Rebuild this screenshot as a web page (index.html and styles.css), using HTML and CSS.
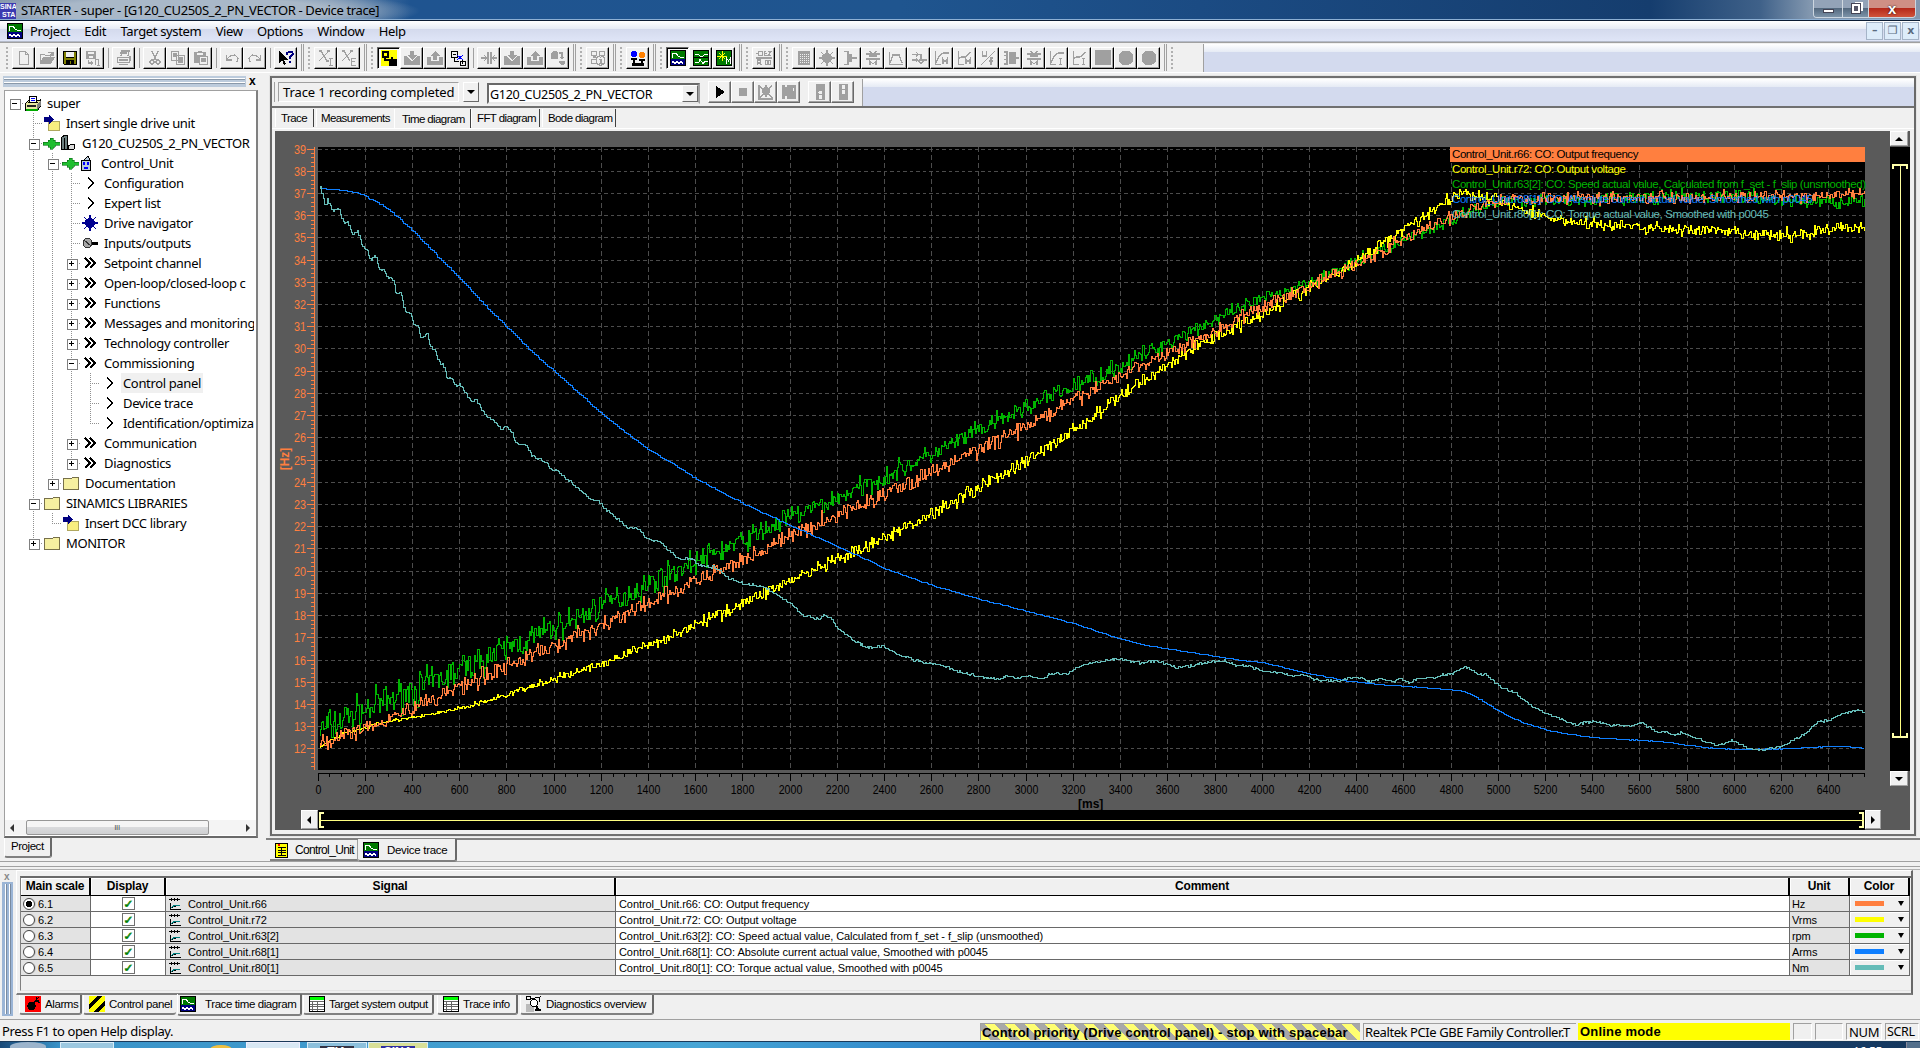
FILE: index.html
```html
<!DOCTYPE html>
<html lang="en">
<head>
<meta charset="utf-8">
<title>STARTER - super - [G120_CU250S_2_PN_VECTOR - Device trace]</title>
<link rel="stylesheet" href="styles.css">
</head>
<body>
<svg class="defs" width="0" height="0">
  <symbol id="new" viewBox="0 0 16 16"><path class="g" d="M3.5 1.5h6l3 3v10h-9zM9.5 1.5v3h3"/></symbol>
  <symbol id="open" viewBox="0 0 16 16"><path class="g" d="M1.5 13V4.500h4l1 1h5v2M9 2.500h3l2 2M14 2v3h-3"/><path class="gf" d="M1 14l3-7h12l-4 7z"/></symbol>
  <symbol id="save" viewBox="0 0 16 16"><path d="M1 1h14v14H2l-1-1z"/><path fill="#808000" d="M2 2h2v6h8V2h2v12H2z"/><path fill="#f0f0f0" d="M4 2h8v5H4zM9 11h2v3H9z"/><path d="M4 10h8v4H9v-3H8v3H4z"/></symbol>
  <symbol id="savebin" viewBox="0 0 16 16"><path class="gf" d="M1 1h10v8H1z"/><path fill="#f0f0f0" d="M3 2h6v2H3zM4 6h4v2H4z"/><path class="g" d="M3.500 10v3h4M6 11l2 2-2 2M10.500 9v6M13.500 9v6M11 9.500h2M12 15.500h3"/></symbol>
  <symbol id="print" viewBox="0 0 16 16"><path class="g" d="M5 6l1-5h7l-1 5M1.500 7.500h12v5h-12zM14 6v5M4 3h7M3 14.500h9M3 10h9"/></symbol>
  <symbol id="cut" viewBox="0 0 16 16"><path class="g" d="M5 1l4 9M11 1l-4 9"/><circle class="g" cx="5" cy="12" r="2"/><circle class="g" cx="11" cy="12" r="2"/></symbol>
  <symbol id="copy" viewBox="0 0 16 16"><path class="g" d="M1.500 1.500h7v9h-7zM3 4h4M3 6h4M6.500 5.500h8v9h-8zM8 8h5M8 10h5M8 12h5"/></symbol>
  <symbol id="paste" viewBox="0 0 16 16"><path class="gf" d="M1 2h12v11H1z"/><path fill="#f0f0f0" d="M4 3h6v2H4zM7 7h8v8H7z"/><path class="g" d="M6.500 6.500h8v8h-8zM8 9h5M8 11h5M5 1.500h4"/></symbol>
  <symbol id="undo" viewBox="0 0 16 16"><path class="g" d="M2.500 5v5h5M3 9l3-3 5-1 3 3-1 4"/></symbol>
  <symbol id="redo" viewBox="0 0 16 16"><path class="g" d="M13.500 5v5h-5M13 9l-3-3-5-1-3 3 1 4"/></symbol>
  <symbol id="help" viewBox="0 0 16 16"><path d="M1 1v12l3-3 2 5 2-1-2-4h4z"/><path fill="none" stroke="#000080" stroke-width="2" d="M9 5V3l2-1h3l1 2-3 3v2M12 11v2"/></symbol>
  <symbol id="xi" viewBox="0 0 16 16"><path class="g" d="M3 1l6 10M11 1L1 11M1 1h3M9 1h3M8 11h3M12.500 8v7M11 8.500h4M11 15.500h4"/></symbol>
  <symbol id="xe" viewBox="0 0 16 16"><path class="g" d="M3 1l6 10M11 1L1 11M1 1h3M9 1h3M10.500 8v7M10 8.500h5M10 11.500h4M10 15.500h5"/></symbol>
  <symbol id="online" viewBox="0 0 16 16"><path fill="none" stroke="#000" stroke-width="1.300" d="M2 2h5v5H2zM4 7v3h8M11 7v4M9 10h6v5H9zM11 10v4M13 10v4"/></symbol>
  <symbol id="offline" viewBox="0 0 16 16"><path fill="none" stroke="#000" d="M1.500 1.500h6v6h-6zM3 4h3M10 11h5v4h-5zM12 10v4M4 8v3h5"/><path stroke="#00f" fill="none" d="M7 5l6 5M13 5l-6 5"/></symbol>
  <symbol id="down" viewBox="0 0 16 16"><path class="gf" d="M6 1h4v4h3l-5 5-5-5h3zM0 6h3l5 6 5-6h3v9H0z"/></symbol>
  <symbol id="up" viewBox="0 0 16 16"><path class="gf" d="M6 10V6H3l5-5 5 5h-3v4zM0 7h4v4h8V7h4v8H0z"/></symbol>
  <symbol id="split" viewBox="0 0 16 16"><path class="g" d="M7 2v12M10 2v12M0 8h6M3 5l3 3-3 3M16 8h-5M14 5l-3 3 3 3"/></symbol>
  <symbol id="conv" viewBox="0 0 16 16"><path class="gf" d="M1 3l2-2h3l2 2v6H1zM9 11h6v2l-2 2h-2l-2-2z"/><path class="g" d="M9 3h3v6M10 7l2 2 2-2"/></symbol>
  <symbol id="info" viewBox="0 0 16 16"><path class="g" d="M1.500 1.500h5v4h-5zM9.500 1.500h5v4h-5zM1.500 9.500h5v4h-5zM3 7h3M10.500 5.500l4 2v6l-4 2-4-2v-6zM10.500 7v1M9 9.500h2v4M9 13.500h4"/></symbol>
  <symbol id="asgn" viewBox="0 0 16 16"><circle cx="4" cy="4" r="3.300" fill="#00f"/><circle cx="12" cy="5" r="3.300" fill="#ff8000"/><path fill="none" stroke="#000" stroke-width="1.500" d="M1 9h6M4 9v4M9 10h6M12 10v3"/><path d="M2 13h12v3H2z"/></symbol>
  <symbol id="trace" viewBox="0 0 16 16"><path d="M0 0h16v9H0z" fill="#007a00"/><path d="M0 9h16v7H0z" fill="#000080"/><path class="w" d="M2 8V3h4l2 3 2 1h4"/><path class="w" d="M2 12.500l1-1 1 1 1 1 1-1 1-1 1 1 1 1 1-1 1-1 1 1 1 1"/><path fill="none" stroke="#000" d="M.5.5h15v15H.5z"/></symbol>
  <symbol id="fgen" viewBox="0 0 16 16"><path d="M0 0h16v16H0z" fill="#007a00"/><path class="w" d="M2 4h3l2 2h3l2-2h3M2 12h4l1-3 3 5 2-3h3"/><path d="M0 7h16v1H0z"/><path fill="none" stroke="#000" d="M.5.5h15v15H.5z"/></symbol>
  <symbol id="meas" viewBox="0 0 16 16"><path d="M0 0h16v16H0z" fill="#007a00"/><path stroke="#ff0" fill="none" d="M6 1v10M1 6h10M3 3l6 6M9 3L3 9"/><path class="w" d="M10.500 14V8l2 3 2-3v6"/><path fill="none" stroke="#000" d="M.5.5h15v15H.5z"/></symbol>
  <symbol id="re" viewBox="0 0 16 16"><path class="g" d="M0 3.500h2M2.500 1.500h4v4h-4zM10 1.500H8.500v4H11M8.500 3.500h2M12 1.500h3l-3 4h3M0 8h16M1.500 15v-5h3v3h-3M4 13l1 2M9.500 10.500h5v4h-5zM12 10v5"/></symbol>
  <symbol id="tbl" viewBox="0 0 16 16"><path class="gf" d="M2 1h12v14H2z"/><path stroke="#f0f0f0" stroke-dasharray="1 1" d="M4 4.500h9M4 6.500h9M4 8.500h9M4 10.500h9M4 12.500h9"/></symbol>
  <symbol id="wheel" viewBox="0 0 16 16"><path stroke="currentColor" stroke-width="1.400" fill="none" d="M8 0v16M0 8h16M2 2l12 12M14 2L2 14"/><circle cx="8" cy="8" r="4" fill="none" stroke="currentColor" stroke-width="2.400"/></symbol>
  <symbol id="act" viewBox="0 0 16 16"><path class="g" d="M2 1.500h4v13H2M6 8h9"/><path class="gf" d="M6 4h4v8H6z"/></symbol>
  <symbol id="lim" viewBox="0 0 16 16"><path class="gf" d="M1 3h14v2H1zM1 8h14v2H1z"/><path class="g" d="M4 1l3 2M12 1L9 3M5 15v-4l3 3 3-3v4M4 6h8"/></symbol>
  <symbol id="ramp" viewBox="0 0 16 16"><path class="g" d="M1.500 2v12.500H15M2 13l3-8h6l3 8"/></symbol>
  <symbol id="lim2" viewBox="0 0 16 16"><path class="g" d="M1 4.500h9v6M1 10h6M5 2l2 2-2 3M5 8l2 2-2 2M12 10h4"/><circle class="g" cx="10" cy="11" r="2"/></symbol>
  <symbol id="cm" viewBox="0 0 16 16"><path class="g" d="M1.500 1v13.500H7M2 13l3-7 4-3h6M9 14v-5l2 3 2-3v5"/></symbol>
  <symbol id="lm" viewBox="0 0 16 16"><path class="g" d="M1.500 1v13.500H7M1 9l4-2h3l6-5M9 14V9l2 3 2-3v5"/></symbol>
  <symbol id="uf" viewBox="0 0 16 16"><path class="g" d="M2.500 1v5h4V1M15 1L1 15M13 8h-2v7M9 11h4"/></symbol>
  <symbol id="ml" viewBox="0 0 16 16"><path class="g" d="M1 2h3v12H1M4 5.500H1M4 9.500H1M13 8h3"/><path class="gf" d="M6 2h7v12H6z"/></symbol>
  <symbol id="ci" viewBox="0 0 16 16"><path class="g" d="M1.500 1v13.500H7M2 13l3-7 4-3h6M11.500 9v5M10 8.500h3M10 14.500h3"/></symbol>
  <symbol id="li" viewBox="0 0 16 16"><path class="g" d="M1.500 1v13.500H7M1 9l4-2h3l6-5M11.500 9v5M10 8.500h3M10 14.500h3"/></symbol>
  <symbol id="sq" viewBox="0 0 16 16"><path class="gf" d="M0 0h16v15H0z"/></symbol>
  <symbol id="ci2" viewBox="0 0 16 16"><circle class="gf" cx="8" cy="8" r="7.500"/></symbol>
  <symbol id="play" viewBox="0 0 16 16"><path d="M4 2v12l9-6z"/></symbol>
  <symbol id="stop" viewBox="0 0 16 16"><path class="gf" d="M4 4h8v8H4z"/></symbol>
  <symbol id="tr1" viewBox="0 0 16 16"><path class="g" d="M1 1v14h14M1 2l14 12M14 1L2 14M8 1v12"/><circle class="gf" cx="8" cy="7" r="4"/></symbol>
  <symbol id="tr2" viewBox="0 0 16 16"><path class="gf" d="M1 1h14v14H1z"/><path fill="#f0f0f0" d="M4 1h2v2H4zM12 4h1v3h-1zM4 12h2v3H4z"/></symbol>
  <symbol id="lt1" viewBox="0 0 16 16"><path class="gf" d="M4 0h9v16H4z"/><circle cx="8.500" cy="8.500" r="2" fill="#f0f0f0"/><circle cx="8.500" cy="13" r="2" fill="#f0f0f0"/></symbol>
  <symbol id="lt2" viewBox="0 0 16 16"><path class="gf" d="M4 0h9v16H4z"/><circle cx="8.500" cy="3" r="2" fill="#f0f0f0"/><circle cx="8.500" cy="8" r="2" fill="#f0f0f0"/></symbol>
  <symbol id="proj" viewBox="0 0 16 16"><path fill="#e8e8a0" stroke="#000" d="M.5 8.500l3-3h11l1-1v7l-3 3.500h-12z"/><path fill="#fff" stroke="#000" d="M4 7l1-6h6l1 6z"/><path stroke="#00f" d="M6 3h4M6 5h4"/><path fill="#808080" d="M12 9l4-4v5l-4 4z"/><path fill="#222" d="M2 10h9v2H2z"/><path fill="#0a0" d="M1 14h12v1.500H1z"/></symbol>
  <symbol id="ins" viewBox="0 0 16 16"><path fill="#f8ee80" stroke="#b0a860" d="M4 6h11v9H4z"/><path fill="#000080" d="M0 2h5V0l5 4.500L5 9V7H0z"/></symbol>
  <symbol id="plug" viewBox="0 0 17 16"><path fill="#1fbf2f" stroke="#0a6a18" stroke-width=".6" d="M0 7h5V5h2V3h3v2h2v2h5v3h-5v2h-2v2H7v-2H5v-2H0z"/></symbol>
  <symbol id="drive" viewBox="0 0 16 16"><path fill="#6d8080" stroke="#000" d="M1 3l3-2.500h3v14H1zM4 3v11"/><path fill="#ddd" stroke="#000" d="M8 11l4-2 3 1-1 4-5 1z"/></symbol>
  <symbol id="cu" viewBox="0 0 16 16"><path fill="#bcd" stroke="#000" d="M2.500 5.500h9v10h-9zM5 5l4-4 2 4"/><path fill="#00f" d="M4 7h2v3H4zM8 7h2v3H8zM5 12h4v2H5z"/></symbol>
  <symbol id="one" viewBox="0 0 16 16"><path fill="none" stroke="#000" stroke-width="1.500" d="M6 2.500l5 5.500-5 5.500"/></symbol>
  <symbol id="two" viewBox="0 0 16 16"><path fill="none" stroke="#000" stroke-width="1.500" d="M3 3l5 5-5 5M8 3l5 5-5 5"/></symbol>
  <symbol id="io" viewBox="0 0 16 16"><circle cx="5.500" cy="8" r="4.500" fill="#a8a8a8" stroke="#333"/><path stroke="#333" d="M2 5l7 6"/><path d="M10 7h6v3h-6z"/></symbol>
  <symbol id="folder" viewBox="0 0 16 16"><path fill="#f6f0a0" stroke="#77704a" d="M.5 14.500v-11h8l1-1.500h6v12.500z"/></symbol>
  <symbol id="bin" viewBox="0 0 14 16"><path fill="#ff0" stroke="#000" d="M.5 1.500h12v14H.5z"/><path stroke="#000" d="M3 5.500h8M3 8h8M3 10.500h8M3 13h8M6 5v9"/><path fill="#f00" d="M3 2h2v2H3z"/></symbol>
  <symbol id="alarm" viewBox="0 0 16 16"><path fill="#f00" d="M0 0h16v16H0z"/><circle cx="6.500" cy="10" r="4.200"/><path stroke="#000" fill="none" d="M9 7l2-3h3M11 1v5M14 1l-3 3 4 3"/></symbol>
  <symbol id="stripe" viewBox="0 0 16 16"><path fill="#ff0" d="M0 0h16v16H0z"/><path d="M0 8l8-8h5L0 13zM4 16L16 4v5l-7 7z"/></symbol>
  <symbol id="list" viewBox="0 0 16 16"><path fill="#fff" stroke="#000" d="M.5.500h15v15H.5z"/><path fill="#0f0" d="M1 1h14v3H1z"/><path fill="none" stroke="#666" d="M1 5.500h14M1 8.500h14M1 10.500h14M1 13.500h14M8.500 5v10M3.500 5v10"/></symbol>
  <symbol id="diag" viewBox="0 0 16 16"><path fill="#bbb" d="M0 8h8v8H0z"/><path fill="none" stroke="#000" d="M.5.500h4v3h-4zM5 2h4l5-1-1 5"/><circle cx="8" cy="7" r="3.500" fill="#fff" stroke="#000"/><path stroke="#000" stroke-width="2" d="M10 10l2 3M9 14h6"/></symbol>
  <symbol id="sig" viewBox="0 0 12 13"><path fill="none" stroke="#000" d="M0 2.500h11M2.500 1v3M5.500 1v3M8.500 1v3M1.500 6v6.500h10"/><path stroke="#008080" d="M2 11l3-2.500h6"/></symbol>
</svg>

<header class="titlebar">
  <span class="appicon">SINA<br>&nbsp;STA</span>
  <span class="title">STARTER - super - [G120_CU250S_2_PN_VECTOR - Device trace]</span>
  <span class="winbtns"><b class="min"><i></i></b><b class="max"><i></i></b><b class="cls">x</b></span>
</header>

<nav class="menubar">
  <svg class="ic"><use href="#trace"/></svg>
  <span>Project</span><span>Edit</span><span>Target system</span><span>View</span><span>Options</span><span>Window</span><span>Help</span>
  <span class="mdi"><b>–</b><b>❐</b><b>x</b></span>
</nav>

<div class="toolbar">
  <i class="gap first"></i>
  <b><svg><use href="#new"/></svg></b><b><svg><use href="#open"/></svg></b><b><svg><use href="#save"/></svg></b><b><svg><use href="#savebin"/></svg></b><i class="sep"></i>
  <b><svg><use href="#print"/></svg></b><i class="sep"></i>
  <b><svg><use href="#cut"/></svg></b><b><svg><use href="#copy"/></svg></b><b><svg><use href="#paste"/></svg></b><i class="sep"></i>
  <b><svg><use href="#undo"/></svg></b><b><svg><use href="#redo"/></svg></b><i class="sep"></i>
  <b><svg><use href="#help"/></svg></b><i class="gap"></i>
  <b><svg><use href="#xi"/></svg></b><b><svg><use href="#xe"/></svg></b><i class="gap"></i>
  <b class="on"><svg class="yel"><use href="#online"/></svg></b><b><svg><use href="#down"/></svg></b><b><svg><use href="#up"/></svg></b><b><svg><use href="#offline"/></svg></b><i class="sep"></i>
  <b><svg><use href="#split"/></svg></b><b><svg><use href="#down"/></svg></b><b><svg><use href="#up"/></svg></b><b><svg><use href="#conv"/></svg></b><i class="gap"></i>
  <b><svg><use href="#info"/></svg></b><i class="gap"></i>
  <b><svg><use href="#asgn"/></svg></b><i class="gap"></i>
  <b class="on"><svg><use href="#trace"/></svg></b><b><svg><use href="#fgen"/></svg></b><b><svg><use href="#meas"/></svg></b><i class="gap"></i>
  <b><svg><use href="#re"/></svg></b><i class="gap"></i>
  <b><svg><use href="#tbl"/></svg></b><b><svg class="gr"><use href="#wheel"/></svg></b><b><svg><use href="#act"/></svg></b><b><svg><use href="#lim"/></svg></b><b><svg><use href="#ramp"/></svg></b><b><svg><use href="#lim2"/></svg></b><b><svg><use href="#cm"/></svg></b><b><svg><use href="#lm"/></svg></b><b><svg><use href="#uf"/></svg></b><b><svg><use href="#ml"/></svg></b><b><svg><use href="#lim"/></svg></b><b><svg><use href="#ci"/></svg></b><b><svg><use href="#li"/></svg></b><b><svg><use href="#sq"/></svg></b><b><svg><use href="#ci2"/></svg></b><b><svg><use href="#ci2"/></svg></b><i class="gap"></i>
  <i class="rest"></i>
</div>

<main class="main">
  <aside class="side">
    <div class="grip"><i></i><b>x</b></div>
    <div class="treebox">
      <div class="tree">
        <p><i class="mn root"></i><svg><use href="#proj"/></svg><span>super</span></p>
        <p><i></i><i class="te"></i><svg><use href="#ins"/></svg><span>Insert single drive unit</span></p>
        <p><i></i><i class="te mn"></i><svg class="plug"><use href="#plug"/></svg><svg class="n"><use href="#drive"/></svg><span>G120_CU250S_2_PN_VECTOR</span></p>
        <p><i></i><i class="ln"></i><i class="te mn"></i><svg class="plug"><use href="#plug"/></svg><svg class="n"><use href="#cu"/></svg><span>Control_Unit</span></p>
        <p><i></i><i class="ln"></i><i class="ln"></i><i class="te"></i><svg><use href="#one"/></svg><span>Configuration</span></p>
        <p><i></i><i class="ln"></i><i class="ln"></i><i class="te"></i><svg><use href="#one"/></svg><span>Expert list</span></p>
        <p><i></i><i class="ln"></i><i class="ln"></i><i class="te"></i><svg class="navy"><use href="#wheel"/></svg><span>Drive navigator</span></p>
        <p><i></i><i class="ln"></i><i class="ln"></i><i class="te"></i><svg><use href="#io"/></svg><span>Inputs/outputs</span></p>
        <p><i></i><i class="ln"></i><i class="ln"></i><i class="te pl"></i><svg><use href="#two"/></svg><span>Setpoint channel</span></p>
        <p><i></i><i class="ln"></i><i class="ln"></i><i class="te pl"></i><svg><use href="#two"/></svg><span>Open-loop/closed-loop c</span></p>
        <p><i></i><i class="ln"></i><i class="ln"></i><i class="te pl"></i><svg><use href="#two"/></svg><span>Functions</span></p>
        <p><i></i><i class="ln"></i><i class="ln"></i><i class="te pl"></i><svg><use href="#two"/></svg><span>Messages and monitoring</span></p>
        <p><i></i><i class="ln"></i><i class="ln"></i><i class="te pl"></i><svg><use href="#two"/></svg><span>Technology controller</span></p>
        <p><i></i><i class="ln"></i><i class="ln"></i><i class="te mn"></i><svg><use href="#two"/></svg><span>Commissioning</span></p>
        <p><i></i><i class="ln"></i><i class="ln"></i><i class="ln"></i><i class="te"></i><svg><use href="#one"/></svg><span class="sel">Control panel</span></p>
        <p><i></i><i class="ln"></i><i class="ln"></i><i class="ln"></i><i class="te"></i><svg><use href="#one"/></svg><span>Device trace</span></p>
        <p><i></i><i class="ln"></i><i class="ln"></i><i class="ln"></i><i class="te end"></i><svg><use href="#one"/></svg><span>Identification/optimizat</span></p>
        <p><i></i><i class="ln"></i><i class="ln"></i><i class="te pl"></i><svg><use href="#two"/></svg><span>Communication</span></p>
        <p><i></i><i class="ln"></i><i class="ln"></i><i class="te end pl"></i><svg><use href="#two"/></svg><span>Diagnostics</span></p>
        <p><i></i><i class="ln"></i><i class="te end pl"></i><svg><use href="#folder"/></svg><span>Documentation</span></p>
        <p><i></i><i class="te mn"></i><svg><use href="#folder"/></svg><span>SINAMICS LIBRARIES</span></p>
        <p><i></i><i class="ln"></i><i class="te end"></i><svg><use href="#ins"/></svg><span>Insert DCC library</span></p>
        <p><i></i><i class="te end pl"></i><svg><use href="#folder"/></svg><span>MONITOR</span></p>
      </div>
      <div class="hbar"><i class="al"></i><b>III</b><i class="ar"></i></div>
    </div>
    <div class="sidetab ms">Project</div>
  </aside>

  <section class="work">
    <div class="frame">
      <div class="tracebar">
        <div class="combo1">Trace 1 recording completed</div>
        <i class="dd"></i>
        <div class="combo2"><span>G120_CU250S_2_PN_VECTOR</span><i class="dd"></i></div>
        <div class="tbtns">
          <b><svg><use href="#play"/></svg></b><b><svg><use href="#stop"/></svg></b><b><svg><use href="#tr1"/></svg></b><b><svg><use href="#tr2"/></svg></b><i></i><b><svg><use href="#lt1"/></svg></b><b><svg><use href="#lt2"/></svg></b>
        </div>
        <div class="rest"></div>
      </div>
      <div class="tabs ms"><span>Trace</span><span>Measurements</span><span class="act">Time diagram</span><span>FFT diagram</span><span>Bode diagram</span></div>
      <div class="panel">
        <svg id="chart" class="chart" width="1615" height="679" viewBox="275 131 1615 679"></svg>
        <div class="vscroll"><i class="sb up"></i><div class="track"><i class="br"></i></div><i class="sb dn"></i></div>
        <div class="hscroll"><i class="sb lf"></i><div class="track"><i class="br"></i></div><i class="sb rt"></i></div>
        <ul class="legend ms">
          <li class="first">Control_Unit.r66: CO: Output frequency</li>
          <li class="c2">Control_Unit.r72: CO: Output voltage</li>
          <li class="c3">Control_Unit.r63[2]: CO: Speed actual value, Calculated from f_set - f_slip (unsmoothed)</li>
          <li class="c4">Control_Unit.r68[1]: CO: Absolute current actual value, Smoothed with p0045</li>
          <li class="c5">Control_Unit.r80[1]: CO: Torque actual value, Smoothed with p0045</li>
        </ul>
      </div>
    </div>
    <div class="worktabs ms"><span class="t1"><svg width="14" height="16"><use href="#bin"/></svg>Control_Unit</span><span class="t2"><svg width="16" height="16"><use href="#trace"/></svg>Device trace</span></div>
  </section>
</main>

<section class="dock">
  <div class="dgrip"><b>x</b><i></i></div>
  <div class="dmain">
    <div class="dframe">
      <div class="grid">
        <div class="row head"><b>Main scale</b><b>Display</b><b>Signal</b><b>Comment</b><b>Unit</b><b>Color</b></div>
        <div class="row"><span class="r"><i class="rad on"></i>6.1</span><span class="c"><i>✓</i></span><span class="s"><svg><use href="#sig"/></svg>Control_Unit.r66</span><span>Control_Unit.r66: CO: Output frequency</span><span class="u">Hz</span><span class="k k1"><i></i></span></div>
        <div class="row"><span class="r"><i class="rad"></i>6.2</span><span class="c"><i>✓</i></span><span class="s"><svg><use href="#sig"/></svg>Control_Unit.r72</span><span>Control_Unit.r72: CO: Output voltage</span><span class="u">Vrms</span><span class="k k2"><i></i></span></div>
        <div class="row"><span class="r"><i class="rad"></i>6.3</span><span class="c"><i>✓</i></span><span class="s"><svg><use href="#sig"/></svg>Control_Unit.r63[2]</span><span>Control_Unit.r63[2]: CO: Speed actual value, Calculated from f_set - f_slip (unsmoothed)</span><span class="u">rpm</span><span class="k k3"><i></i></span></div>
        <div class="row"><span class="r"><i class="rad"></i>6.4</span><span class="c"><i>✓</i></span><span class="s"><svg><use href="#sig"/></svg>Control_Unit.r68[1]</span><span>Control_Unit.r68[1]: CO: Absolute current actual value, Smoothed with p0045</span><span class="u">Arms</span><span class="k k4"><i></i></span></div>
        <div class="row"><span class="r"><i class="rad"></i>6.5</span><span class="c"><i>✓</i></span><span class="s"><svg><use href="#sig"/></svg>Control_Unit.r80[1]</span><span>Control_Unit.r80[1]: CO: Torque actual value, Smoothed with p0045</span><span class="u">Nm</span><span class="k k5"><i></i></span></div>
      </div>
    </div>
    <div class="dtabs ms"><span class="d1"><svg><use href="#alarm"/></svg>Alarms</span><span class="d2"><svg><use href="#stripe"/></svg>Control panel</span><span class="d3 act"><svg><use href="#trace"/></svg>Trace time diagram</span><span class="d4"><svg><use href="#list"/></svg>Target system output</span><span class="d5"><svg><use href="#list"/></svg>Trace info</span><span class="d6"><svg><use href="#diag"/></svg>Diagnostics overview</span></div>
  </div>
</section>

<footer class="status">
  <span class="msg">Press F1 to open Help display.</span>
  <span class="prio">Control priority (Drive control panel) - stop with spacebar</span>
  <span class="nic">Realtek PCIe GBE Family Controller.T</span>
  <span class="mode">Online mode</span>
  <span class="e1"></span><span class="e2"></span><span class="num">NUM</span><span class="scrl">SCRL</span>
</footer>
<div class="taskbar"><i class="orb"></i><i class="a"></i><i class="ie"></i><i class="b"></i><i class="c"><b>TIA</b></i><i class="d"><b>SINA</b></i><i class="clock">16:55</i><i class="show"></i></div>
<script src="chart.js"></script>
</body>
</html>
```
FILE: styles.css
```css
* { box-sizing: border-box; }
body { margin: 0; width: 1920px; height: 1048px; overflow: hidden; background: #f0f0f0; color: #000; font: 13px "Noto Sans", "Open Sans", sans-serif; letter-spacing: -0.35px; display: flex; flex-direction: column; }
i, b { font-style: normal; display: block; }
p, ul { margin: 0; padding: 0; list-style: none; }
svg { display: block; flex: none; shape-rendering: crispEdges; }
.defs { position: absolute; }
.g { fill: none; stroke: #a0a0a0; stroke-width: 1.35; }
.gf { fill: #a0a0a0; }
.w { fill: none; stroke: #fff; }
.ms { font: 11.5px "Liberation Sans", Arial, sans-serif; letter-spacing: -0.6px; }

.titlebar { height: 21px; flex: none; display: flex; align-items: center; border-bottom: 1px solid #0b1c33; box-shadow: inset 0 -1px #8db0d4; background: radial-gradient(ellipse 230px 22px at 190px 11px, #a9b8c8 60%, transparent 100%), linear-gradient(90deg, #8193a8 0, #6e8cae 330px, #1f5490 410px, #1f558f 900px, #1b4b83 1200px, #153d6e 1650px, #3f6189 1760px, #8297af 1810px); }
.appicon { width: 16px; height: 16px; margin-top: 2px; background: #3a3ab0; color: #fff; font: bold 7px/8px "Liberation Sans", sans-serif; overflow: hidden; letter-spacing: 0; }
.title { margin-left: 5px; flex: 1; line-height: 18px; }
.winbtns { display: flex; align-self: flex-start; height: 18px; margin-right: 4px; border: 1px solid #ccd6e0; border-top: 0; border-radius: 0 0 4px 4px; overflow: hidden; }
.winbtns b { height: 17px; border-right: 1px solid #d0d8e0; background: linear-gradient(#93a3b8 45%, #54697f 50%, #7c93a8); color: #fff; display: flex; align-items: center; justify-content: center; }
.min { width: 29px; } .max { width: 26px; }
.min i { width: 11px; height: 4px; background: #fff; border: 1px solid #445; margin-top: 5px; }
.max i { width: 8px; height: 9px; border: 2px solid #fff; outline: 1px solid #445; background: #556; box-shadow: 3px -2px #fff; }
.winbtns .cls { width: 46px; border: 0; background: linear-gradient(#cf8f84 45%, #b5291a 50%, #d0543c); font: bold 15px/14px "Liberation Sans", sans-serif; text-shadow: 0 0 2px #000; }

.menubar { height: 21px; flex: none; display: flex; align-items: center; padding-left: 7px; background: linear-gradient(#fff, #e6ebf5 40%, #d4daed 41%, #dfe5f7); border-bottom: 1px solid #b4bac8; line-height: 20px; }
.menubar .ic { width: 16px; height: 16px; margin-right: 7px; }
.menubar > span { margin-right: 14.3px; }
.menubar .mdi { margin: 0 1px 0 auto; display: flex; gap: 1px; }
.mdi b { width: 17px; height: 18px; border: 1px solid #a5b4c8; background: #ddecfa; color: #5a6b80; font: bold 11px/16px "DejaVu Sans", sans-serif; text-align: center; }

.toolbar { height: 31px; flex: none; display: flex; align-items: center; border-top: 1px solid #a0a0a0; border-bottom: 1px solid #fff; }
.toolbar b, .tbtns b { width: 23px; height: 22px; border: 1px solid; border-color: #fff #696969 #696969 #fff; box-shadow: inset -1px -1px #a0a0a0; display: flex; align-items: center; justify-content: center; }
.toolbar b { border-color: #fff #000 #000 #fff; }
.toolbar b.on { border-color: #696969 #fff #fff #696969; box-shadow: inset 1px 1px #000; background: #f8f8f8; }
.toolbar svg, .tbtns svg { width: 16px; height: 16px; }
.yel { background: #ff0; }
.gr { color: #a0a0a0; } .navy { color: #000090; }
.toolbar .sep { width: 8px; height: 20px; background: linear-gradient(#a0a0a0, #a0a0a0) 4px 0 / 1px 100% no-repeat; }
.toolbar .gap { width: 17px; height: 27px; background: linear-gradient(#a0a0a0, #a0a0a0) 4px 0 / 1px 100% no-repeat, linear-gradient(#a0a0a0, #a0a0a0) 6px 0 / 1px 100% no-repeat, repeating-linear-gradient(#b0b0b0 0 2px, transparent 2px 4px) 11px 3px / 2px 22px no-repeat; }
.toolbar .gap.first { width: 12px; background: repeating-linear-gradient(#b0b0b0 0 2px, transparent 2px 4px) 6px 3px / 2px 22px no-repeat; }
.toolbar .rest { margin-left: 26px; flex: 1; height: 28px; }
.rest { border-left: 1px solid #a0a0a0; background: linear-gradient(#fff, #e6ebf5 28%, #d3daee 29%); }

.main { height: 789px; flex: none; display: flex; border-bottom: 1px solid #a0a0a0; }
.side { width: 266px; padding: 3px 8px 0 3px; display: flex; flex-direction: column; }
.grip { height: 14px; display: flex; align-items: flex-start; gap: 3px; }
.grip i { width: 243px; height: 11px; background: #bccbdc; border: solid #bccbdc; border-width: 2px 1px; background-image: linear-gradient(#fff 0 1px, #8a99aa 1px 2px, transparent 2px 4px, #fff 4px 5px, #8a99aa 5px 6px, transparent 6px); }
.grip b { font: bold 12px/10px "Liberation Sans", sans-serif; }
.treebox { height: 748px; border: 1px solid #a0a0a0; border-width: 1px 2px 2px 1px; border-color: #a0a0a0 #808080 #696969 #a0a0a0; background: #fff; display: flex; flex-direction: column; margin-left: 1px; width: 254px; }
.tree { height: 729px; padding: 2px 0 0; margin-right: 2px; overflow: hidden; }
.tree p { height: 20px; display: flex; align-items: center; white-space: nowrap; }
.tree i { width: 19px; height: 20px; flex: none; position: relative; }
.tree .ln, .tree .te { background: repeating-linear-gradient(#909090 0 1px, transparent 1px 2px) 9px 0 / 1px 100% no-repeat; }
.tree .te, .tree .root { background: repeating-linear-gradient(#909090 0 1px, transparent 1px 2px) 9px 0 / 1px 100% no-repeat, repeating-linear-gradient(90deg, #909090 0 1px, transparent 1px 2px) 9px 10px / 10px 1px no-repeat; }
.tree .end { background-size: 1px 10px, 10px 1px; }
.tree .root { background-size: 0 0, 10px 1px; }
.tree .mn::before, .tree .pl::before { content: ""; position: absolute; left: 5px; top: 6px; width: 9px; height: 9px; border: 1px solid #808080; background: linear-gradient(#000, #000) 1px 3px / 5px 1px no-repeat #fff; }
.tree .pl::before { background: linear-gradient(#000, #000) 1px 3px / 5px 1px no-repeat, linear-gradient(#000, #000) 3px 1px / 1px 5px no-repeat #fff; }
.tree svg { width: 16px; height: 16px; margin: 0 4px 0 1px; }
.tree svg.plug { width: 17px; margin: 0 -1px 0 0; }
.tree svg.n { margin-right: 4px; }
.tree span { padding: 0 2px; line-height: 20px; }
.tree .sel { background: #f0f0f0; }
.hbar { height: 15px; display: flex; align-items: center; justify-content: space-between; padding: 0 6px 0 5px; background: #f4f4f4; }
.hbar b { width: 183px; height: 15px; margin-left: -26px; border: 1px solid #979797; border-radius: 2px; background: linear-gradient(#f5f5f5 45%, #d9dadc 50%, #cfd0d2); font: 8px/13px "Liberation Sans", sans-serif; color: #555; text-align: center; }
.al, .ar { border: 4px solid transparent; border-width: 4px 0 4px 4px; border-left-color: #333; }
.al { transform: scaleX(-1); }
.sidetab { width: 48px; height: 20px; margin-left: 1px; border: 1px solid #fff; border-right: 2px solid #696969; border-bottom: 2px solid #808080; border-radius: 0 0 3px 3px; padding-left: 6px; line-height: 17px; border-top: 0; letter-spacing: -0.45px; }

.work { flex: 1; padding: 3px 0 0 4px; }
.frame { height: 760px; width: 1646px; border: 2px solid #696969; border-top-color: #707070; border-bottom-color: #707070; outline: 1px solid #e4e4e4; display: flex; flex-direction: column; }
.tracebar { height: 30px; display: flex; align-items: center; border-bottom: 2px solid #707070; padding-left: 6px; flex: none; }
.combo1 { width: 181px; height: 20px; border: 1px solid #a0a0a0; border-color: #a0a0a0 #fff #fff #a0a0a0; padding-left: 4px; line-height: 18px; letter-spacing: -0.1px; white-space: nowrap; box-shadow: -3px 0 #f0f0f0, -4px 0 #a0a0a0; }
.dd { width: 16px; height: 20px; margin-left: 4px; border: 1px solid; border-color: #fff #696969 #696969 #fff; display: flex; align-items: center; justify-content: center; }
.dd::before { content: ""; border: 4px solid transparent; border-top-color: #000; border-bottom: 0; }
.combo2 { width: 213px; height: 21px; margin: 3px 0 0 8px; border: 2px solid; border-color: #696969 #a0a0a0 #e8e8e8 #696969; background: #fff; display: flex; }
.combo2 span { flex: 1; padding-left: 1px; line-height: 19px; white-space: nowrap; font-size: 12.6px; }
.combo2 .dd { height: 17px; margin: 0; background: #f0f0f0; }
.tbtns { display: flex; margin-left: 8px; }
.tbtns i { width: 8px; }
.tracebar .rest { margin-left: 8px; flex: 1; height: 27px; }
.tabs { height: 21px; flex: none; display: flex; align-items: flex-start; padding: 1px 0 0 3px; border-bottom: 1px solid #fff; }
.tabs span { height: 18px; line-height: 18px; padding: 0 6px 0 5px; border-right: 1px solid #404040; border-left: 1px solid #fff; white-space: nowrap; margin-right: 2px; }
.tabs span:nth-child(1) { width: 39px; } .tabs span:nth-child(2) { width: 78px; border-right: 0; margin-right: 0; padding-left: 4px; }
.tabs .act { width: 77px; height: 19px; line-height: 20px; padding-left: 7px; margin: 0; }
.tabs span:nth-child(4) { width: 69px; } .tabs span:nth-child(5) { width: 74px; }

.panel { position: relative; margin: 2px 0 0 3px; width: 1635px; height: 699px; background: #5a5a5a; display: grid; grid-template: 679px 20px / 1615px 20px; }
.vscroll { display: flex; flex-direction: column; height: 655px; }
.vscroll .track { flex: 1; background: #000; padding: 17px 2px 33px; margin-top: 1px; }
.vscroll .br { height: 100%; background: linear-gradient(#ffffa0, #ffff80) 8px 0 / 1px 100% no-repeat, linear-gradient(#ffa, #ffa) 0 0 / 100% 2px no-repeat, linear-gradient(#ffa, #ffa) 0 100% / 100% 2px no-repeat, linear-gradient(#ffa, #ffa) 0 0 / 2px 5px no-repeat, linear-gradient(#ffa, #ffa) 100% 0 / 2px 5px no-repeat, linear-gradient(#ffa, #ffa) 0 100% / 2px 5px no-repeat, linear-gradient(#ffa, #ffa) 100% 100% / 2px 5px no-repeat; width: 16px; }
.hscroll { display: flex; padding-left: 26px; width: 1606px; }
.hscroll .track { flex: 1; background: #000; padding: 2px 1px; }
.hscroll .br { height: 16px; background: linear-gradient(#ffff80, #ffff80) 0 8px / 100% 1px no-repeat, linear-gradient(#ffa, #ffa) 0 0 / 2px 100% no-repeat, linear-gradient(#ffa, #ffa) 100% 0 / 2px 100% no-repeat, linear-gradient(#ffa, #ffa) 0 0 / 5px 2px no-repeat, linear-gradient(#ffa, #ffa) 0 100% / 5px 2px no-repeat, linear-gradient(#ffa, #ffa) 100% 0 / 5px 2px no-repeat, linear-gradient(#ffa, #ffa) 100% 100% / 5px 2px no-repeat; }
.sb { width: 18px; height: 15px; flex: none; background: #f0f0f0; border: 1px solid; border-color: #fff #a0a0a0 #a0a0a0 #fff; display: flex; align-items: center; justify-content: center; }
.hscroll .sb { width: 16px; height: 19px; }
.hscroll .lf { width: 17px; padding-right: 2px; }
.sb::before { content: ""; border: 4px solid transparent; border-bottom-color: #000; border-top: 0; }
.dn::before { transform: rotate(180deg); } .lf::before { transform: rotate(-90deg); } .rt::before { transform: rotate(90deg); }
.legend { position: absolute; left: 1175px; top: 16px; width: 415px; letter-spacing: -0.42px; }
.legend li { height: 15px; line-height: 15px; padding-left: 2px; white-space: nowrap; }
.legend .first { background: #ff7f3f; }
.c2 { color: #ff0; } .c3 { color: #00b400; } .c4 { color: #0f7fff; } .c5 { color: #65bcb8; }
.axis text { font: 12px "Liberation Sans", Arial, sans-serif; letter-spacing: 0; }
.ax-y text { fill: #ff7f3f; }
.axis .unit { font-weight: bold; }
.worktabs { height: 24px; display: flex; align-items: flex-start; margin-left: -4px; border-top: 2px solid #808080; padding-left: 4px; margin-top: 2px; }
.worktabs span { display: flex; align-items: center; border-bottom: 2px solid #808080; }
.t1 { width: 88px; height: 21px; padding-left: 5px; gap: 6px; font-size: 12px; letter-spacing: -0.65px; border-right: 1px solid #a0a0a0; }
.t2 { width: 99px; height: 23px; padding-left: 5px; gap: 8px; letter-spacing: -0.3px; border-right: 2px solid #696969; background: #f0f0f0; border-radius: 0 0 3px 3px; margin-top: -1px; }

.dock { height: 158px; flex: none; display: flex; padding: 8px 7px 0 0; background: linear-gradient(#a0a0a0, #a0a0a0) 0 4px / 100% 1px no-repeat, linear-gradient(#b0b0b0, #b0b0b0) 0 7px / 100% 1px no-repeat; border-bottom: 1px solid #a0a0a0; }
.dgrip { width: 16px; flex: none; padding: 1px 3px 0 2px; display: flex; flex-direction: column; }
.dgrip b { font: bold 10px/11px "Liberation Sans", sans-serif; color: #888; padding-left: 2px; }
.dgrip i { height: 134px; background: #9bb5d6; border: 2px solid #9bb5d6; background-image: linear-gradient(90deg, transparent 1px, #fff 1px 2px, #7a8ba0 2px 3px, transparent 3px 5px, #fff 5px 6px, #7a8ba0 6px 7px, transparent 7px); }
.dmain { flex: 1; min-width: 0; }
.dframe { height: 125px; border: 1px solid #fff; border-right: 2px solid #696969; border-bottom: 2px solid #808080; padding: 5px 0 0 3px; }
.grid { border: 1px solid #808080; border-top: 2px solid #696969; height: 115px; border-right: 0; border-bottom: 1px solid #e3e3e3; }
.row { height: 16px; display: grid; grid-template-columns: 70px 75px 450px 1174px 60px 60px; font: 11px/14px "Liberation Sans", Arial, sans-serif; letter-spacing: -0.08px; }
.head { height: 18px; }
.head b { font: bold 12px/17px "Liberation Sans", sans-serif; letter-spacing: -0.2px; text-align: center; border-right: 2px solid #000; border-bottom: 2px solid #000; box-shadow: inset 1px 1px #fff; }
.row span { border-right: 1px solid #696969; border-bottom: 1px solid #696969; background: #fff; padding-left: 3px; display: flex; align-items: center; white-space: nowrap; }
.row .r, .row .s, .row .u { background: #e3e3e3; }
.row .r { padding-left: 2px; }
.row .u { padding-left: 2px; }
.rad { width: 12px; height: 12px; border: 1px solid #444; border-radius: 50%; background: #fff; margin-right: 3px; box-shadow: 1px 0 #c8c8c8; }
.rad.on { background: radial-gradient(circle, #000 3px, #fff 3.500px); }
.row .c { justify-content: center; padding: 0; }
.c i { width: 13px; height: 13px; border: 1px solid #707070; color: #008000; font: bold 12px/12px "DejaVu Sans", sans-serif; text-align: center; letter-spacing: 0; text-shadow: 1px 0 #008000; }
.s svg { width: 12px; height: 13px; margin-right: 7px; }
.row .k { background: #f0f0f0; box-shadow: inset 1px 1px #fff; justify-content: space-between; padding: 0 5px; }
.k i { width: 29px; height: 5px; background: #ff7f3f; }
.k::after { content: ""; border: 3px solid transparent; border-top: 5px solid #000; border-bottom: 0; }
.k2 i { background: #ff0; } .k3 i { background: #00b400; } .k4 i { background: #0f7fff; } .k5 i { background: #65bcb8; }
.dtabs { display: flex; padding-left: 3px; gap: 1px; letter-spacing: -0.4px; }
.dtabs span { height: 20px; display: flex; align-items: center; padding-left: 5px; gap: 4px; border-right: 2px solid #696969; border-bottom: 2px solid #808080; border-left: 1px solid #fff; border-radius: 0 0 3px 3px; white-space: nowrap; }
.dtabs svg { width: 16px; height: 16px; }
.d1 { width: 63px; } .d2 { width: 93px; } .d4 { width: 131px; } .d5 { width: 81px; margin-left: 2px; } .d6 { width: 134px; margin-left: 1px; }
.dtabs .d2 { border-right: 0; }
.dtabs .d3 { width: 125px; height: 22px; padding-left: 2px; gap: 9px; margin-top: -1px; }

.status { height: 21px; flex: none; display: flex; align-items: center; padding-top: 1px; line-height: 17px; white-space: nowrap; }
.status span { height: 17px; overflow: hidden; flex: none; }
.msg { width: 980px; padding-left: 2px; }
.status .prio { width: 380px; margin-right: 3px; font: bold 13px/18px "Liberation Sans", sans-serif; letter-spacing: 0.2px; padding-left: 1px; border: 1px solid #a0a0a0; border-width: 1px 0 0 1px; background: repeating-linear-gradient(45deg, #ffff70 0 7px, #a8a8a8 7px 14px); }
.status .nic { width: 213px; border: 1px solid #a0a0a0; border-width: 1px 0 0 1px; padding-left: 1px; margin-right: 2px; line-height: 16px; letter-spacing: -0.42px; }
.status .mode { width: 212px; background: #ff0; font: bold 13px/18px "Liberation Sans", sans-serif; letter-spacing: 0.2px; padding-left: 2px; margin-right: 3px; }
.e1, .e2, .num, .scrl { border: 1px solid; border-color: #a0a0a0 #fff #fff #a0a0a0; margin-right: 3px; padding-left: 2px; line-height: 16px; }
.e1 { width: 19px; } .e2 { width: 28px; } .num { width: 36px; } .status .scrl { width: 34px; padding-left: 1px; margin-right: 0; font-size: 12.5px; }

.taskbar { height: 9px; flex: none; display: flex; border-top: 1px solid #1a3a5a; overflow: hidden; background: linear-gradient(90deg, #1a4a78, #3a93c8 60px, #47a5d5 700px, #2a80c8 1000px, #2668b0 1250px, #1f5fa0 1400px, #173e6a 1800px, #14365c); }
.taskbar i { height: 9px; }
.orb { width: 36px; margin-left: 10px; border-radius: 50% 50% 0 0; background: #9cb4cc; }
.a { width: 54px; margin-left: 14px; background: #9cc8e0; border: 1px solid #d8ecf8; border-bottom: 0; }
.ie { width: 22px; margin-left: 96px; margin-top: 3px; border: 3px solid #f0c040; border-radius: 50% 50% 0 0; }
.b { width: 54px; margin-left: 14px; background: #d8e8f4; border: 1px solid #eef; border-bottom: 0; }
.taskbar .c, .d { width: 60px; margin-left: 7px; padding: 3px 12px 0; background: #8cc0dc; border: 1px solid #d8ecf8; border-bottom: 0; }
.taskbar .d { margin-left: 1px; background: #d8e098; }
.c b, .d b { background: #334; color: #fff; font: bold 12px/12px "Liberation Sans", sans-serif; text-align: center; letter-spacing: 0; }
.d b { background: #3030a0; }
.clock { margin-left: auto; margin-right: 24px; margin-top: 3px; color: #fff; font-size: 12px; line-height: 14px; }
.show { width: 14px; background: #54708c; border-left: 1px solid #889; }
```
FILE: chart.js
```js
// Plot geometry: 39..12 on the value axis, 0..6550 ms on the time axis.
const svg = document.getElementById('chart');
const px = ms => 318.5 + ms * 0.23606;
const py = v => 149.5 + (39 - v) * 22.22;
const parts = [];
const R = Math.round;

parts.push('<rect x="318" y="147" width="1547" height="623" fill="#000"/>');
for (let v = 12; v <= 39; v++)
  parts.push(`<path d="M318 ${R(py(v)) - .5}H1865" stroke="#4c4c4c" stroke-dasharray="3.5 3"/>`);
for (let ms = 200; ms <= 6400; ms += 200)
  parts.push(`<path d="M${R(px(ms)) - .5} ${ms > 4800 ? 165 : 147}V770" stroke="#4c4c4c" stroke-dasharray="5 3"/>`);

// Value axis
parts.push('<g class="axis ax-y"><path d="M314.500 147V770" stroke="#ff7f3f" stroke-width="1.500"/>');
for (let k = 0; k <= 140; k++) {
  const y = R(149.5 + k * 22.22 / 5) - .5;
  if (y > 769) break;
  const major = k % 5 === 0 && k <= 135;
  parts.push(`<path d="M${major ? 307 : 311} ${y}H315" stroke="#ff7f3f"/>`);
  if (major) parts.push(`<text x="294" y="${y + 4.5}" textLength="12" lengthAdjust="spacingAndGlyphs">${39 - k / 5}</text>`);
}
parts.push('<text class="unit" transform="translate(289 459) rotate(-90)" text-anchor="middle">[Hz]</text></g>');

// Time axis
parts.push('<g class="axis"><path d="M318 773.500H1865" stroke="#000"/>');
for (let k = 0; k <= 131; k++) {
  const x = R(px(k * 50)) - .5, major = k % 4 === 0;
  parts.push(`<path d="M${x} 773V${major ? 781 : 777}" stroke="#000"/>`);
  if (major) {
    const t = String(k * 50), w = t.length * 5.9;
    parts.push(`<text x="${x - w / 2}" y="793.500" textLength="${w}" lengthAdjust="spacingAndGlyphs">${t}</text>`);
  }
}
parts.push('<text class="unit" x="1078" y="808">[ms]</text></g>');

let seed = 7;
const rnd = () => (seed = (seed * 16807) % 2147483647) / 2147483647;
const lerp = (pts, t) => {
  let i = 2;
  while (i < pts.length - 2 && pts[i] < t) i += 2;
  const f = (t - pts[i - 2]) / (pts[i] - pts[i - 2]);
  return pts[i - 1] + Math.max(0, Math.min(1, f)) * (pts[i + 1] - pts[i - 1]);
};
// Sampled trace drawn as steps; noise is an amplitude curve over time.
function trace(color, pts, noise, step) {
  let d = '';
  for (let t = 0; t <= 6548; t += step) {
    const n = lerp(noise, t) * (rnd() + rnd() + rnd() - 1.5) * 1.15;
    const x = R(px(t)) + .5, y = R(py(lerp(pts, t) + n)) + .5;
    d += d ? `H${x}V${y}` : `M${x} ${y}`;
  }
  parts.push(`<path d="${d}" fill="none" stroke="${color}" stroke-width="1.300"/>`);
}

trace('#00b400', [0,12.9,200,13.8,400,14.7,600,15.6,800,16.6,1000,17.5,1200,18.5,1400,19.5,1600,20.5,1800,21.45,2000,22.5,2166,23.2,2517,24.9,3000,27.45,3399,29.3,3737,31.1,4048,32.5,4359,33.75,4600,35,4693,35.4,4800,35.85,4865,36.2,4920,36.4,5005,36.7,5430,36.8,6000,36.95,6279,36.65,6547,36.75], [0,.7,800,.58,1600,.48,2200,.4,3400,.33,4500,.24,6547,.28], 5);
trace('#ffff00', [0,12.1,50,12.4,100,12.75,200,13,250,13.25,400,13.45,600,13.87,800,14.5,1000,15.2,1200,15.9,1400,16.75,1600,17.65,1800,18.65,2000,19.65,2166,20.4,2283,20.93,2517,22.2,2802,23.9,3000,25,3321,27.3,3399,28,3737,30.3,4048,31.95,4359,33.7,4582,35.4,4667,35.97,4766,36.65,4843,37.17,4893,36.95,5005,36.7,5147,36.12,5288,35.8,5458,35.6,5642,35.5,5854,35.37,6137,35.15,6278,35.2,6406,35.5,6547,35.45], [0,.06,500,.07,1000,.15,1800,.25,3000,.28,4500,.26,6547,.24], 5);
trace('#ff7f3f', [0,12.3,200,13.05,400,13.9,600,14.9,800,15.8,1000,16.7,1200,17.65,1400,18.6,1600,19.6,1800,20.6,2000,21.65,2200,22.6,2517,24.1,3000,26.6,3399,28.9,3804,30.9,4048,32.2,4359,33.7,4600,35,4693,35.5,4800,35.95,4865,36.35,4920,36.5,5005,36.8,5430,36.87,5996,36.9,6279,36.87,6547,37.05], [0,.35,1000,.34,2200,.32,3400,.28,6547,.22], 5);
trace('#0f7fff', [0,37.26,97,37.2,157,37.08,200,36.9,286,36.4,396,35.37,475,34.5,600,33.17,702,32,800,30.98,906,29.87,1000,29,1095,28.1,1198,27.12,1322,26.1,1398,25.5,1504,24.83,1602,24.17,1800,23.07,2000,22.07,2166,21.29,2329,20.51,2403,20.12,2602,19.39,2800,18.77,3000,18.23,3200,17.67,3372,17.06,3500,16.7,3705,16.36,3902,16.03,4000,15.92,4203,15.41,4356,15.1,4503,14.93,4600,14.86,4800,14.7,4851,14.63,4912,14.31,5000,13.72,5093,13.24,5202,12.89,5290,12.71,5400,12.55,5600,12.43,5713,12.34,5800,12.19,5901,12.08,6000,12.02,6200,12.05,6440,12.17,6547,12.08], [0,.02,6547,.01], 8);
trace('#65bcb8', [0,37.28,6,37.28,18,36.8,26,36.45,36,36.77,59,36.2,82,36.38,104,35.67,120,35.8,142,35.2,162,35.37,182,34.65,200,34.55,218,34,236,34.25,257,33.54,271,33.68,294,33.2,309,33.3,327,32.5,345,32.57,366,31.7,381,31.74,404,31.05,415,31.14,434,30.5,454,30.75,472,30.1,495,29.93,505,29.52,525,29.34,540,28.74,563,28.7,578,28.35,596,28.44,619,28.1,646,27.65,664,27.78,707,27,750,26.72,770,26.4,793,26.55,815,26.27,832,25.8,876,25.7,902,25.2,947,25.05,986,24.6,1005,24.65,1027,24.35,1080,23.9,1141,23.35,1179,23.2,1224,22.73,1307,22,1352,21.95,1390,21.47,1436,21.41,1474,21,1527,20.6,1579,20.57,1610,20.3,1685,20.2,1731,19.74,1806,19.44,1867,19.4,1912,19.15,2000,18.56,2048,18.06,2117,17.88,2139,18.08,2162,17.96,2200,17.43,2283,16.79,2329,16.58,2382,16.69,2450,16.27,2495,16.16,2571,15.89,2646,15.8,2692,15.56,2790,15.3,2888,15.2,2919,15.33,2964,15.23,2994,15.33,3055,15.2,3093,15.4,3176,15.43,3206,15.7,3282,15.95,3388,16.1,3478,15.9,3539,16,3645,15.7,3796,16,3842,16,3880,15.8,3940,15.8,3985,15.55,4083,15.47,4121,15.3,4174,15.38,4212,15.15,4326,15.1,4356,15.25,4412,15.25,4443,15.1,4495,15.2,4549,15.07,4579,15.23,4621,15,4639,15.17,4700,15.28,4722,15.2,4760,15.44,4790,15.4,4851,15.74,4904,15.45,4942,15.4,5010,14.78,5063,14.6,5093,14.3,5199,13.6,5260,13.4,5302,13.16,5335,13.15,5396,13.3,5471,13.1,5570,13.1,5600,13.22,5668,12.8,5706,12.8,5744,12.64,5769,12.8,5850,12.45,5921,12.2,5986,12.4,6069,12.02,6130,12.02,6205,12.2,6289,12.7,6349,13.28,6402,13.36,6455,13.65,6523,13.8,6547,13.7], [0,.05,6547,.05], 6);

svg.innerHTML = parts.join('');
```
